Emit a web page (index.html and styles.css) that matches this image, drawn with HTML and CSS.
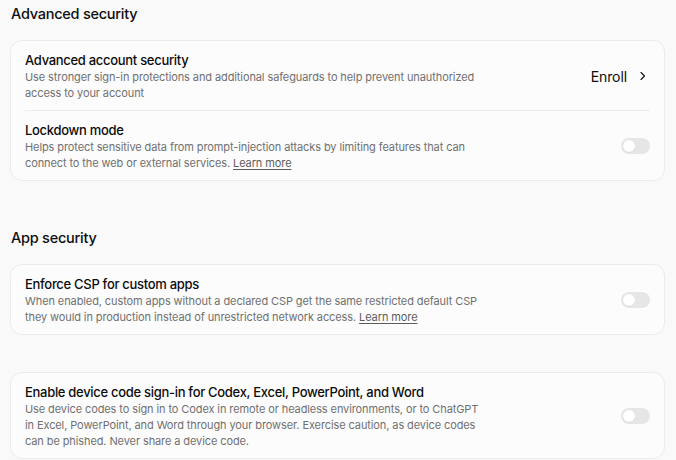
FILE: index.html
```html
<!DOCTYPE html>
<html lang="en">
<head>
<meta charset="utf-8">
<title>Security settings</title>
<link rel="stylesheet" href="styles.css">
</head>
<body>
<main class="page">
  <section class="section">
    <h2 class="section-title">Advanced security</h2>
    <div class="card">
      <div class="row">
        <div class="row-text">
          <div class="row-title">Advanced account security</div>
          <div class="row-desc">Use stronger sign-in protections and additional safeguards to help prevent unauthorized access to your account</div>
        </div>
        <button class="enroll" type="button">Enroll
          <svg class="chev" width="6" height="10" viewBox="0 0 6 10" aria-hidden="true"><path d="M1 1.5l3.5 3.5-3.5 3.5" fill="none" stroke="#0d0d0d" stroke-width="1.1" stroke-linecap="round" stroke-linejoin="round"/></svg>
        </button>
      </div>
      <div class="divider"></div>
      <div class="row">
        <div class="row-text">
          <div class="row-title">Lockdown mode</div>
          <div class="row-desc">Helps protect sensitive data from prompt-injection attacks by limiting features that can connect to the web or external services. <a class="link" href="#">Learn more</a></div>
        </div>
        <span class="toggle"><span class="knob"></span></span>
      </div>
    </div>
  </section>

  <section class="section section-gap">
    <h2 class="section-title">App security</h2>
    <div class="card">
      <div class="row">
        <div class="row-text">
          <div class="row-title">Enforce CSP for custom apps</div>
          <div class="row-desc">When enabled, custom apps without a declared CSP get the same restricted default CSP they would in production instead of unrestricted network access. <a class="link" href="#">Learn more</a></div>
        </div>
        <span class="toggle"><span class="knob"></span></span>
      </div>
    </div>
    <div class="card card-gap">
      <div class="row">
        <div class="row-text">
          <div class="row-title">Enable device code sign-in for Codex, Excel, PowerPoint, and Word</div>
          <div class="row-desc">Use device codes to sign in to Codex in remote or headless environments, or to ChatGPT in Excel, PowerPoint, and Word through your browser. Exercise caution, as device codes can be phished. Never share a device code.</div>
        </div>
        <span class="toggle"><span class="knob"></span></span>
      </div>
    </div>
  </section>
</main>
</body>
</html>
```
FILE: styles.css
```css
* { box-sizing: border-box; }
html, body {
  margin: 0;
  padding: 0;
  background: #f9f9f9;
}
body {
  font-family: Inter, "Noto Sans", sans-serif;
  color: #0d0d0d;
}
.page {
  padding: 4px 11px 0 10px;
}
.section-title {
  margin: 0 0 16px 1px;
  font-size: 14.5px;
  line-height: 20px;
  font-weight: 500;
  letter-spacing: -0.25px;
}
.section-gap {
  margin-top: 47px;
}
.card {
  background: #fcfcfc;
  border: 1px solid #ebebeb;
  border-radius: 12px;
}
.card-gap {
  margin-top: 37px;
}
.row {
  display: flex;
  align-items: center;
  justify-content: space-between;
  gap: 24px;
  padding: 10px 14px 9px;
}
.row-text {
  flex: 1;
  min-width: 0;
}
.row-title {
  font-size: 13px;
  line-height: 18px;
  font-weight: 500;
  letter-spacing: -0.3px;
}
.row-desc {
  font-size: 11px;
  line-height: 16px;
  color: #707070;
  letter-spacing: -0.1px;
  max-width: 458px;
}
.link {
  color: #5d5d5d;
  text-decoration: underline;
  text-underline-offset: 1.5px;
}
.divider {
  height: 1px;
  background: #ececec;
  margin: 0 14px;
}
.enroll {
  display: flex;
  align-items: center;
  gap: 13px;
  border: 0;
  background: none;
  padding: 0 4px 0 0;
  font-family: inherit;
  font-size: 14px;
  letter-spacing: -0.1px;
  color: #0d0d0d;
  cursor: pointer;
}
.chev { display: block; }
.toggle {
  flex: none;
  width: 29px;
  height: 16px;
  border-radius: 8px;
  background: #e6e6e6;
  padding: 2px;
  display: flex;
  align-items: center;
}
.knob {
  width: 12px;
  height: 12px;
  border-radius: 50%;
  background: #ffffff;
  box-shadow: 0 0.5px 1px rgba(0,0,0,0.10);
}
```
